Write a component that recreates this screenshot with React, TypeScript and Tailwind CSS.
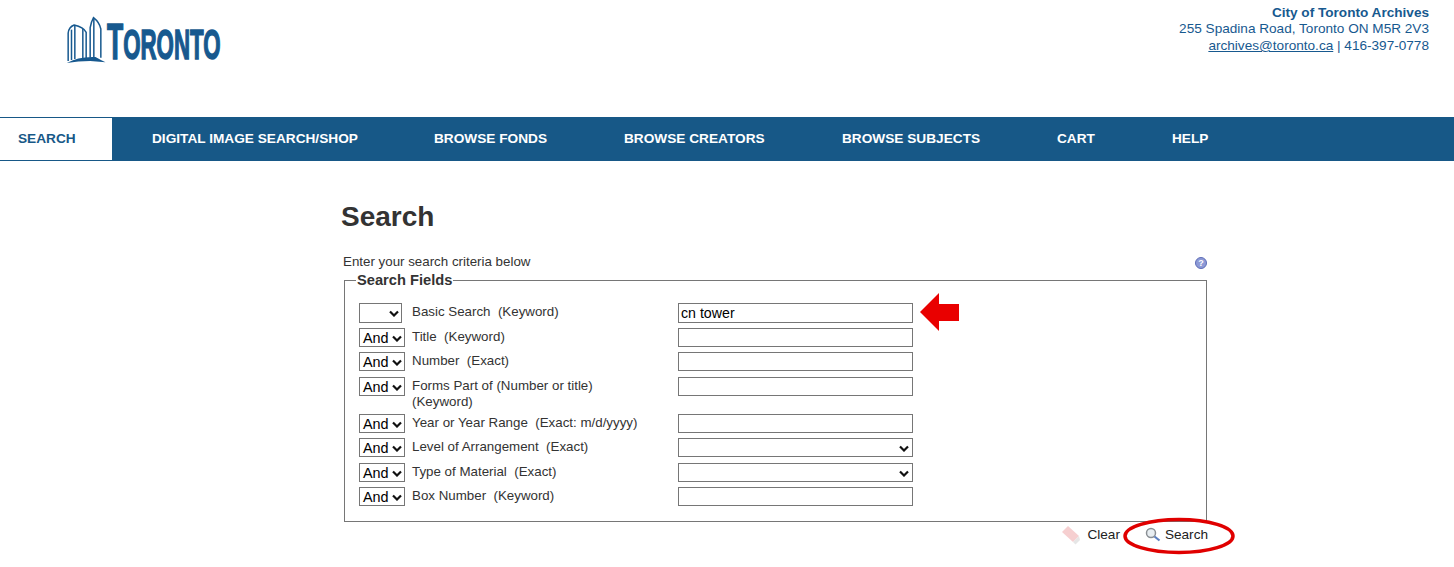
const rows = [
  { op: "", label: "Basic Search  (Keyword)", h: "h-[25px]", box: "h-[20px]", value: "cn tower" },
  { op: "And", label: "Title  (Keyword)", h: "h-[24px]", box: "h-[19px]" },
  { op: "And", label: "Number  (Exact)", h: "h-[25px]", box: "h-[19px]" },
  { op: "And", label: "Forms Part of (Number or title)  (Keyword)", h: "h-[37px]", box: "h-[19px]" },
  { op: "And", label: "Year or Year Range  (Exact: m/d/yyyy)", h: "h-[24px]", box: "h-[19px]" },
  { op: "And", label: "Level of Arrangement  (Exact)", h: "h-[25px]", box: "h-[19px]", select: true },
  { op: "And", label: "Type of Material  (Exact)", h: "h-[24px]", box: "h-[19px]", select: true },
  { op: "And", label: "Box Number  (Keyword)", h: "h-[25px]", box: "h-[19px]" },
];

const navItems = [
  { label: "DIGITAL IMAGE SEARCH/SHOP", w: "w-[282px]" },
  { label: "BROWSE FONDS", w: "w-[190px]" },
  { label: "BROWSE CREATORS", w: "w-[218px]" },
  { label: "BROWSE SUBJECTS", w: "w-[215px]" },
  { label: "CART", w: "w-[115px]" },
  { label: "HELP", w: "w-[113px]" },
];

function Chevron() {
  return (
    <svg width="10" height="7" viewBox="0 0 10 7" className="pointer-events-none shrink-0">
      <path d="M1 1.5l4 4 4-4" fill="none" stroke="#111" strokeWidth="2.2" />
    </svg>
  );
}

function Logo() {
  return (
    <div className="flex items-start h-[50px]">
      {/* drawn in 3x units so it lines up with the source logo */}
      <svg width="42" height="50" viewBox="45 30 125 150" className="shrink-0">
        <g fill="none" stroke="#17598f" strokeWidth="4.5">
          <path d="M54 168V84Q56 66 72 60Q100 66 108 82V160" />
          <path d="M64 165V74" />
          <path d="M74 162V62" />
          <path d="M98 160V72" />
          <path d="M120 158V68Q124 48 130 38Q148 52 152 72V158" />
          <path d="M131 156V40" />
        </g>
        <path d="M50 174Q84 154 136 156Q150 164 166 172L120 168Q84 168 50 174Z" fill="#17598f" />
      </svg>
      <span className="block w-[112px] mt-[2px] font-bold text-[#17598f] leading-none origin-top-left scale-x-[0.53] text-[50px] [-webkit-text-stroke:1.5px_#17598f] whitespace-nowrap">
        T<span className="text-[42px]">ORONTO</span>
      </span>
    </div>
  );
}

export default function App() {
  return (
    <div className="relative w-[1454px] h-[567px] overflow-hidden bg-white font-['Liberation_Sans',Arial,sans-serif] text-[#333]">
      <header className="h-[117px] flex justify-between">
        <div className="ml-[65px] mt-[15px]">
          <Logo />
        </div>
        <div className="mr-[25px] mt-[5px] text-right text-[13.6px] leading-[16px] text-[#17598f]">
          <div className="font-bold">City of Toronto Archives</div>
          <div>255 Spadina Road, Toronto ON M5R 2V3</div>
          <div className="mt-px">
            <span className="underline">archives@toronto.ca</span> | 416-397-0778
          </div>
        </div>
      </header>

      <nav className="h-[44px] bg-[#175887] flex pt-px pb-px">
        <div className="w-[112px] bg-white text-[#175887] text-[13.67px] font-bold flex items-center pl-[18px]">
          SEARCH
        </div>
        {navItems.map((item) => (
          <div
            key={item.label}
            className={`${item.w} shrink-0 pl-[40px] text-white text-[13.67px] font-bold flex items-center whitespace-nowrap`}
          >
            {item.label}
          </div>
        ))}
      </nav>

      <main className="ml-[340px] w-[868px] pt-[39px]">
        <h1 className="ml-px text-[28px] leading-[34px] font-bold text-[#333]">Search</h1>
        <div className="mt-[20px] ml-[3px] flex justify-between items-center h-[16px] text-[13.33px] leading-[16px]">
          <span>Enter your search criteria below</span>
          <span className="mt-[2px] w-[12px] h-[12px] rounded-full bg-[#8d9ad6] border border-[#5e6db8] text-white text-[9px] leading-[10px] font-bold text-center mr-px">
            ?
          </span>
        </div>

        <fieldset className="ml-[4px] mt-[2px] w-[863px] h-[250px] border border-[#767676] pl-[14px] pt-[15px]">
          <legend className="ml-[-3px] px-px text-[14.67px] leading-[16px] font-bold text-[#333]">
            Search Fields
          </legend>
          {rows.map((row) => (
            <div key={row.label} className={`${row.h} flex items-start`}>
              <div
                className={`${row.op ? "w-[46px]" : "w-[43px]"} ${row.box} border border-[#767676] flex items-center justify-between pl-[3px] pr-[2px] pt-px text-[14.4px] leading-none text-black shrink-0`}
              >
                <span>{row.op}</span>
                <Chevron />
              </div>
              <div className={`${row.op ? "ml-[7px]" : "ml-[10px]"} w-[266px] pr-[26px] mt-px shrink-0 text-[13.33px] leading-[16px] whitespace-pre-wrap`}>
                {row.label}
              </div>
              <div className={`${row.box} w-[235px] border border-[#767676] flex items-center justify-between pl-[2px] pr-[3px] pt-px text-[14.2px] leading-none text-black shrink-0`}>
                <span>{row.value}</span>
                {row.select && <Chevron />}
              </div>
            </div>
          ))}
        </fieldset>

        <div className="flex items-center justify-end mt-[3px] h-[20px] text-[13.6px] text-[#222]">
          <svg width="20" height="20" viewBox="0 0 20 20" className="mr-[6px]">
            <path d="M1 7l6-6 11 10-6 6z" fill="#f6cfd0" />
            <path d="M12 17l2.5 2.5 4.5-4.5-1-4z" fill="#e6e6e6" />
          </svg>
          <span className="mr-[25px]">Clear</span>
          <svg width="16" height="16" viewBox="0 0 16 16" className="mr-[4px]">
            <circle cx="6" cy="6" r="4.5" fill="#e8eef2" stroke="#8a8f94" strokeWidth="1.5" />
            <path d="M9.5 9.5l5 4" stroke="#5b7fc0" strokeWidth="2.2" />
          </svg>
          <span>Search</span>
        </div>
      </main>

      <svg width="42" height="38" viewBox="0 0 42 38" className="absolute left-[919px] top-[293px]">
        <path d="M1 19L20 0v11h20v17H20v10z" fill="#e90000" />
      </svg>
      <svg width="114" height="40" viewBox="0 0 114 40" className="absolute left-[1122px] top-[516px]">
        <ellipse cx="57" cy="20" rx="54" ry="16.5" fill="none" stroke="#e00000" strokeWidth="3.5" />
      </svg>
    </div>
  );
}
